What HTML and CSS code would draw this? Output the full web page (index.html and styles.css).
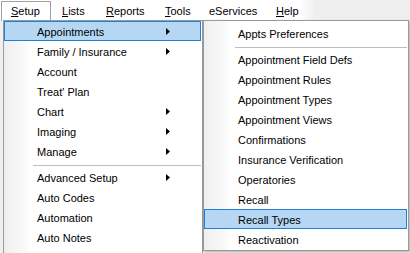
FILE: index.html
```html
<!DOCTYPE html>
<html>
<head>
<meta charset="utf-8">
<link rel="stylesheet" href="styles.css">
</head>
<body>
<div class="screen">
  <nav class="menubar">
    <div class="mi active"><u>S</u>etup</div>
    <div class="mi w-lists"><u>L</u>ists</div>
    <div class="mi w-reports"><u>R</u>eports</div>
    <div class="mi w-tools"><u>T</u>ools</div>
    <div class="mi w-eserv">eServices</div>
    <div class="mi"><u>H</u>elp</div>
  </nav>

  <div class="menu main">
    <div class="item hl"><span>Appointments</span><svg class="arrow" width="4" height="7" viewBox="0 0 4 7"><polygon points="0,0 4,3.5 0,7"/></svg></div>
    <div class="item"><span>Family / Insurance</span><svg class="arrow" width="4" height="7" viewBox="0 0 4 7"><polygon points="0,0 4,3.5 0,7"/></svg></div>
    <div class="item"><span>Account</span></div>
    <div class="item"><span>Treat' Plan</span></div>
    <div class="item"><span>Chart</span><svg class="arrow" width="4" height="7" viewBox="0 0 4 7"><polygon points="0,0 4,3.5 0,7"/></svg></div>
    <div class="item"><span>Imaging</span><svg class="arrow" width="4" height="7" viewBox="0 0 4 7"><polygon points="0,0 4,3.5 0,7"/></svg></div>
    <div class="item"><span>Manage</span><svg class="arrow" width="4" height="7" viewBox="0 0 4 7"><polygon points="0,0 4,3.5 0,7"/></svg></div>
    <div class="sep"></div>
    <div class="item"><span>Advanced Setup</span><svg class="arrow" width="4" height="7" viewBox="0 0 4 7"><polygon points="0,0 4,3.5 0,7"/></svg></div>
    <div class="item"><span>Auto Codes</span></div>
    <div class="item"><span>Automation</span></div>
    <div class="item"><span>Auto Notes</span></div>
  </div>

  <div class="menu sub">
    <div class="item"><span>Appts Preferences</span></div>
    <div class="sep"></div>
    <div class="item"><span>Appointment Field Defs</span></div>
    <div class="item"><span>Appointment Rules</span></div>
    <div class="item"><span>Appointment Types</span></div>
    <div class="item"><span>Appointment Views</span></div>
    <div class="item"><span>Confirmations</span></div>
    <div class="item"><span>Insurance Verification</span></div>
    <div class="item"><span>Operatories</span></div>
    <div class="item"><span>Recall</span></div>
    <div class="item hl"><span>Recall Types</span></div>
    <div class="item"><span>Reactivation</span></div>
  </div>
</div>
</body>
</html>
```

FILE: styles.css
```css
html, body {
  margin: 0;
  padding: 0;
}
body {
  width: 410px;
  height: 253px;
  overflow: hidden;
  background: #f0f0f0;
  font-family: "Liberation Sans", Arial, sans-serif;
  font-size: 11px;
  color: #000;
}
.screen {
  position: relative;
  width: 410px;
  height: 253px;
  overflow: hidden;
}
.menubar {
  display: flex;
  height: 20px;
  padding-left: 1px;
  background: linear-gradient(to right, #ffffff 0, #ffffff 300px, #efefef 315px, #efefef 100%);
}
.mi {
  box-sizing: border-box;
  height: 20px;
  line-height: 20px;
  padding-left: 11px;
  padding-top: 1px;
  white-space: nowrap;
}
.mi u {
  text-decoration: underline;
  text-underline-offset: 1px;
}
.mi.active {
  width: 50px;
  margin-top: 1px;
  height: 20px;
  padding-left: 9px;
  padding-top: 0;
  line-height: 19px;
  background: #fff;
  border: 1px solid #a0a0a0;
  border-bottom: none;
}
.w-lists { width: 44px; }
.w-reports { width: 59px; }
.w-tools { width: 44px; }
.w-eserv { width: 67px; }

.menu {
  position: absolute;
  top: 20px;
  box-sizing: border-box;
  border: 1px solid #9a9a9a;
  background:
    linear-gradient(to right, #efefef 0, #fbfbfb 24px, #ffffff 24px, #ffffff 100%);
  display: flex;
  flex-direction: column;
}
.main {
  left: 3px;
  width: 200px;
  height: 270px;
  padding: 0 1px 0 0;
}
.sub {
  left: 203px;
  width: 206px;
  height: 231px;
  padding: 2px 1px 1px 0;
  box-shadow: 1px 1px 2px rgba(0, 0, 0, 0.28);
}
.item {
  box-sizing: border-box;
  flex: 0 0 20px;
  height: 20px;
  display: flex;
  align-items: center;
  justify-content: space-between;
  border: 1px solid transparent;
  padding-top: 2px;
  white-space: nowrap;
}
.main .item {
  padding-left: 32px;
  padding-right: 30px;
}
.sub .item {
  padding-left: 33px;
  padding-right: 30px;
}
.item.hl {
  background: #b5d7f3;
  border-color: #1f80d6;
}
.arrow {
  display: block;
  margin-top: -1px;
}
.arrow polygon {
  fill: #000;
}
.sep {
  flex: 0 0 6px;
  height: 6px;
  box-sizing: border-box;
  padding-top: 4px;
}
.sep::before {
  content: "";
  display: block;
  height: 1px;
  background: #bdbdbd;
}
.main .sep { margin-left: 29px; }
.sub .sep { margin-left: 31px; }
```
